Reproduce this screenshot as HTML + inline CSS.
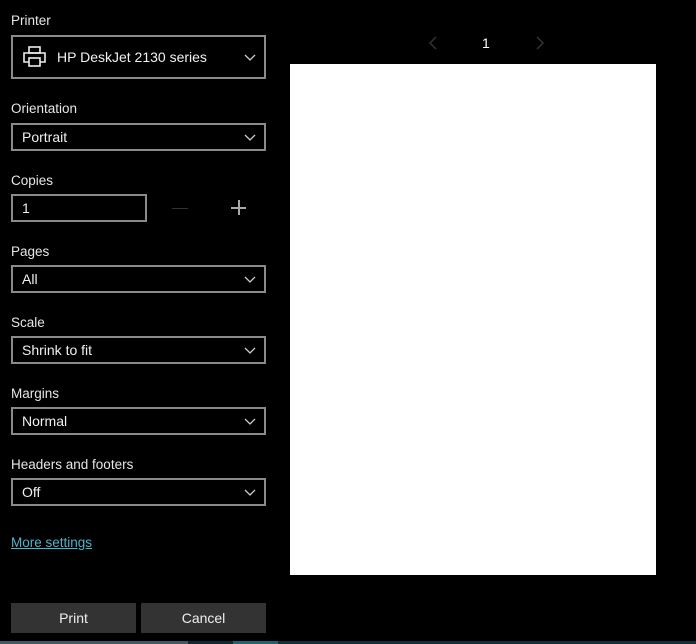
<!DOCTYPE html>
<html><head><style>
body{margin:0;width:696px;height:644px;background:#000;position:relative;overflow:hidden;font-family:"Liberation Sans",sans-serif;color:#fff}
.l{position:absolute;left:11px;font-size:13.5px;color:#e6e6e6}
.b{position:absolute;left:11px;width:251px;height:24px;border:2px solid #8a8a8a;font-size:14px;color:#f0f0f0;line-height:24px;box-sizing:content-box}
.b span{position:absolute;left:9px;top:0}
.c{position:absolute;right:8px;top:5px}
.btn{position:absolute;top:603px;height:30px;width:125px;background:#333;color:#eee;font-size:14px;text-align:center;line-height:30px}
</style></head><body>
<div class="l" style="top:13px">Printer</div>
<div class="b" style="top:35px;height:40px"><svg style="position:absolute;left:10px;top:9px" width="24" height="22" viewBox="0 0 24 22" fill="none" stroke="#eee" stroke-width="1.6"><rect x="6" y="1" width="11" height="6"/><path d="M6 16H1V7h21v9h-5"/><rect x="6" y="12" width="11" height="8"/></svg><span style="left:44px;line-height:40px">HP DeskJet 2130 series</span><svg class="c" style="top:17px" width="12" height="8" viewBox="0 0 12 8"><path d="M1 1l5 5 5-5" fill="none" stroke="#ccc" stroke-width="1.3"/></svg></div>
<div class="l" style="top:101px">Orientation</div>
<div class="b" style="top:123px"><span>Portrait</span><svg class="c" style="top:9px" width="12" height="8" viewBox="0 0 12 8"><path d="M1 1l5 5 5-5" fill="none" stroke="#ccc" stroke-width="1.3"/></svg></div>
<div class="l" style="top:173px">Copies</div>
<div class="b" style="top:194px;width:132px"><span>1</span></div>
<div style="position:absolute;left:172px;top:208px;width:16px;height:1px;background:#333"></div>
<div style="position:absolute;left:231px;top:207px;width:15px;height:1.5px;background:#aaa"></div>
<div style="position:absolute;left:238px;top:200px;width:1.5px;height:15px;background:#aaa"></div>
<div class="l" style="top:244px">Pages</div>
<div class="b" style="top:265px"><span>All</span><svg class="c" style="top:9px" width="12" height="8" viewBox="0 0 12 8"><path d="M1 1l5 5 5-5" fill="none" stroke="#ccc" stroke-width="1.3"/></svg></div>
<div class="l" style="top:315px">Scale</div>
<div class="b" style="top:336px"><span>Shrink to fit</span><svg class="c" style="top:9px" width="12" height="8" viewBox="0 0 12 8"><path d="M1 1l5 5 5-5" fill="none" stroke="#ccc" stroke-width="1.3"/></svg></div>
<div class="l" style="top:386px">Margins</div>
<div class="b" style="top:407px"><span>Normal</span><svg class="c" style="top:9px" width="12" height="8" viewBox="0 0 12 8"><path d="M1 1l5 5 5-5" fill="none" stroke="#ccc" stroke-width="1.3"/></svg></div>
<div class="l" style="top:457px">Headers and footers</div>
<div class="b" style="top:478px"><span>Off</span><svg class="c" style="top:9px" width="12" height="8" viewBox="0 0 12 8"><path d="M1 1l5 5 5-5" fill="none" stroke="#ccc" stroke-width="1.3"/></svg></div>
<div class="l" style="top:535px;color:#4fb3c8;text-decoration:underline">More settings</div>
<div class="btn" style="left:11px">Print</div>
<div class="btn" style="left:141px">Cancel</div>
<svg style="position:absolute;left:428px;top:36px" width="10" height="14" viewBox="0 0 10 14"><path d="M8 1L2 7l6 6" fill="none" stroke="#333" stroke-width="1.5"/></svg>
<div style="position:absolute;left:482px;top:35px;font-size:14px;color:#fff">1</div>
<svg style="position:absolute;left:535px;top:36px" width="10" height="14" viewBox="0 0 10 14"><path d="M2 1l6 6-6 6" fill="none" stroke="#333" stroke-width="1.5"/></svg>
<div style="position:absolute;left:290px;top:64px;width:366px;height:511px;background:#fff"></div>
<div style="position:absolute;left:0;top:641px;width:188px;height:3px;background:#3f5a60"></div>
<div style="position:absolute;left:188px;top:641px;width:45px;height:3px;background:#0e2a30"></div>
<div style="position:absolute;left:233px;top:641px;width:45px;height:3px;background:#1e6570"></div>
<div style="position:absolute;left:278px;top:641px;width:418px;height:3px;background:#0d3238"></div>
</body></html>
